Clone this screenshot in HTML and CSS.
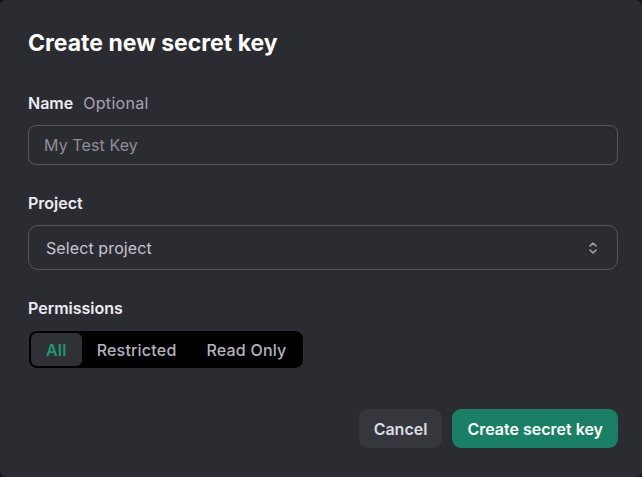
FILE: index.html
```html
<!DOCTYPE html>
<html>
<head>
<meta charset="utf-8">
<link rel="stylesheet" href="styles.css">
</head>
<body>
<div class="dialog">
  <h1 class="title">Create new secret key</h1>
  <div class="field field-first">
    <div class="label">Name <span class="optional">Optional</span></div>
    <div class="input"><span class="placeholder">My Test Key</span></div>
  </div>
  <div class="field">
    <div class="label">Project</div>
    <div class="select">
      <span class="select-text">Select project</span>
      <svg class="chev" width="10" height="14" viewBox="0 0 10 14" fill="none" stroke="#a0a0a8" stroke-width="1.6" stroke-linecap="round" stroke-linejoin="round"><path d="M2 5 L5 2 L8 5"/><path d="M2 9 L5 12 L8 9"/></svg>
    </div>
  </div>
  <div class="field">
    <div class="label">Permissions</div>
    <div class="segmented">
      <span class="seg seg-active">All</span>
      <span class="seg">Restricted</span>
      <span class="seg">Read Only</span>
    </div>
  </div>
  <div class="actions">
    <button class="btn btn-cancel">Cancel</button>
    <button class="btn btn-primary">Create secret key</button>
  </div>
</div>
</body>
</html>
```
FILE: styles.css
```css
html, body {
  margin: 0;
  padding: 0;
  background: #141417;
}
body {
  width: 642px;
  height: 477px;
  overflow: hidden;
  font-family: Inter, "Noto Sans", sans-serif;
}
.dialog {
  box-sizing: border-box;
  width: 642px;
  height: 477px;
  background: #2b2c31;
  border-radius: 6px;
  padding: 29px 24px 0 28px;
  display: flex;
  flex-direction: column;
}
.title {
  margin: 0;
  font-size: 23px;
  line-height: 28px;
  font-weight: 700;
  color: #ffffff;
  letter-spacing: 0;
}
.field {
  display: flex;
  flex-direction: column;
  gap: 10px;
  margin-top: 26px;
}
.field-first {
  margin-top: 34px;
}
.label {
  font-size: 16px;
  line-height: 24px;
  font-weight: 600;
  color: #ececf1;
}
.optional {
  font-weight: 400;
  color: #a5a5b0;
  margin-left: 6px;
  letter-spacing: 0.3px;
}
.input {
  box-sizing: border-box;
  height: 40px;
  border: 1px solid #56575d;
  border-radius: 8px;
  display: flex;
  align-items: center;
  padding-left: 15px;
}
.placeholder {
  font-size: 16px;
  color: #8e8e99;
  letter-spacing: 0.1px;
}
.select {
  box-sizing: border-box;
  height: 45px;
  border: 1px solid #56575d;
  border-radius: 10px;
  display: flex;
  align-items: center;
  justify-content: space-between;
  padding: 0 19px 0 17px;
}
.select-text {
  font-size: 16px;
  color: #c5c5d0;
  letter-spacing: 0.1px;
}
.segmented {
  align-self: flex-start;
  display: flex;
  align-items: center;
  background: #000000;
  border: 1px solid #2f3034;
  border-radius: 9px;
  padding: 2px;
  height: 39px;
  box-sizing: border-box;
}
.seg {
  font-size: 16px;
  font-weight: 500;
  color: #b4b4be;
  padding: 0 15px;
  height: 33px;
  display: flex;
  align-items: center;
  border-radius: 6px;
  letter-spacing: 0.2px;
}
.seg-active {
  background: #303136;
  color: #1a9a72;
  font-weight: 600;
  padding: 0 15px;
}
.actions {
  display: flex;
  justify-content: flex-end;
  gap: 10px;
  margin-top: 40px;
}
.btn {
  font-family: Inter, "Noto Sans", sans-serif;
  font-size: 16px;
  font-weight: 600;
  height: 39px;
  border: none;
  border-radius: 9px;
  padding: 0 15px;
  color: #ececf1;
}
.btn-cancel {
  background: #36373d;
  color: #dcdce4;
}
.btn-primary {
  background: #1a7f64;
  color: #ffffff;
}
```
